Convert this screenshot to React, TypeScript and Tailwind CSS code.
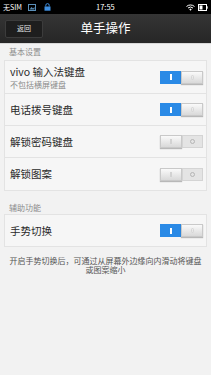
import React from "react";

/**
 * One-hand mode settings screen (vivo style)
 */

function Toggle({ on }: { on: boolean }) {
  const knob = (
    <div className="w-[22px] h-full bg-gradient-to-b from-[#fafafa] to-[#d9d9d9] border border-[#c9c9c9] shadow-[0_1px_1px_rgba(0,0,0,0.25)] flex items-center justify-center">
      <div className={on ? "w-[3px] h-[5px] rounded-full border border-[#d6d6d6]" : "w-[2px] h-[5px] bg-[#d2d2d2]"} />
    </div>
  );
  return (
    <div className="w-[43px] h-[13px] flex shrink-0">
      {on ? (
        <>
          <div className="w-[21px] h-full bg-[#2a8ae6] flex items-center justify-center">
            <div className="w-[2px] h-[6px] bg-white" />
          </div>
          {knob}
        </>
      ) : (
        <>
          {knob}
          <div className="w-[21px] h-full bg-[#e4e4e4] border border-[#d4d4d4] flex items-center justify-center">
            <div className="w-[5px] h-[5px] rounded-full border border-[#b5b5b5]" />
          </div>
        </>
      )}
    </div>
  );
}

function Row({ title, sub, on, h, last }: { title: string; sub?: string; on: boolean; h: string; last?: boolean }) {
  return (
    <div className={`flex items-center justify-between pl-[5px] pr-[3px] ${h} ${last ? "" : "border-b border-[#e3e3e3]"}`}>
      <div className="flex flex-col">
        <span className="text-[10.5px] leading-[14px] text-[#2a2a2a]">{title}</span>
        {sub && <span className="text-[8px] leading-[11px] text-[#8a8a8a]">{sub}</span>}
      </div>
      <Toggle on={on} />
    </div>
  );
}

export default function App() {
  return (
    <div className="w-[211px] h-[375px] bg-[#f2f2f2] font-['Noto_Sans_CJK_SC',sans-serif] overflow-hidden flex flex-col">
      {/* Status bar */}
      <div className="h-[14px] bg-black flex items-center px-[3px] text-white text-[7px] leading-none">
        <div className="flex items-center gap-[5px] w-[80px]">
          <span>无SIM</span>
          <svg width="8" height="7" viewBox="0 0 8 7" className="ml-[1px]">
            <rect x="0.5" y="0.5" width="7" height="6" fill="none" stroke="#5b8fb8" />
            <path d="M1.5 5.5 L3.5 3 L5 4.5 L6.5 3 L6.5 5.5 Z" fill="#5b8fb8" />
          </svg>
          <svg width="7" height="8" viewBox="0 0 7 8" className="ml-[3px]">
            <path d="M1.8 3.5 V2.3 A1.7 1.7 0 0 1 5.2 2.3 V3.5" fill="none" stroke="#3f8fe0" strokeWidth="1" />
            <rect x="0.5" y="3.5" width="6" height="4.2" fill="#3f8fe0" />
          </svg>
        </div>
        <span className="ml-[13px] text-[7.5px]">17:55</span>
        <div className="ml-auto flex items-center gap-[3px]">
          <svg width="9" height="7" viewBox="0 0 9 7">
            <path d="M0.5 2.5 A6 6 0 0 1 8.5 2.5" fill="none" stroke="white" strokeWidth="1" />
            <path d="M2 4 A4 4 0 0 1 7 4" fill="none" stroke="white" strokeWidth="1" />
            <path d="M3.3 5.5 L4.5 4.6 L5.7 5.5 L4.5 6.8 Z" fill="white" />
          </svg>
          <svg width="10" height="7" viewBox="0 0 10 7">
            <rect x="0.5" y="0.5" width="8" height="6" fill="none" stroke="white" />
            <rect x="1.5" y="1.5" width="3" height="4" fill="white" />
            <rect x="8.5" y="2.3" width="1.2" height="2.4" fill="white" />
          </svg>
        </div>
      </div>

      {/* Title bar */}
      <div className="h-[30px] bg-gradient-to-b from-[#353535] to-[#262626] border-b border-[#d8d8d8] relative flex items-center px-[5px]">
        <div className="w-[38px] h-[18px] bg-[#1e1e1e] border border-[#3c3c3c] rounded-[2px] flex items-center justify-center text-[7px] text-[#e6e6e6]">
          返回
        </div>
        <span className="absolute left-0 right-0 text-center text-[12.5px] text-white pointer-events-none">单手操作</span>
      </div>

      {/* Basic settings */}
      <div className="pl-[9px] pt-[3px] pb-[3px] text-[8px] leading-[10px] text-[#8c8c8c]">基本设置</div>
      <div className="mx-[4px] bg-[#f6f6f6] border border-[#e3e3e3]">
        <Row title="vivo 输入法键盘" sub="不包括横屏键盘" on h="h-[33px]" />
        <Row title="电话拨号键盘" on h="h-[32px]" />
        <Row title="解锁密码键盘" on={false} h="h-[32px]" />
        <Row title="解锁图案" on={false} h="h-[32px]" last />
      </div>

      {/* Accessibility */}
      <div className="pl-[9px] pt-[12px] pb-[1px] text-[8px] leading-[10px] text-[#8c8c8c]">辅助功能</div>
      <div className="mx-[4px] bg-[#f6f6f6] border border-[#e3e3e3]">
        <Row title="手势切换" on h="h-[31px]" last />
      </div>

      <p className="mt-[9px] px-[6px] text-center text-[8px] leading-[9px] text-[#555]">
        开启手势切换后，可通过从屏幕外边缘向内滑动将键盘或图案缩小
      </p>
    </div>
  );
}
